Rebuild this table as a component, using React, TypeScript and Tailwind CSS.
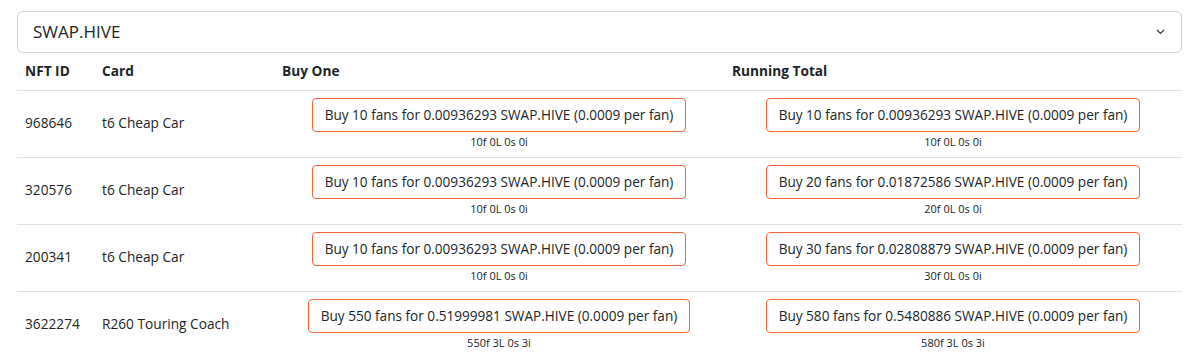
const rows = [
  { id: "968646", card: "t6 Cheap Car", one: "Buy 10 fans for 0.00936293 SWAP.HIVE (0.0009 per fan)", oneSub: "10f 0L 0s 0i", total: "Buy 10 fans for 0.00936293 SWAP.HIVE (0.0009 per fan)", totalSub: "10f 0L 0s 0i" },
  { id: "320576", card: "t6 Cheap Car", one: "Buy 10 fans for 0.00936293 SWAP.HIVE (0.0009 per fan)", oneSub: "10f 0L 0s 0i", total: "Buy 20 fans for 0.01872586 SWAP.HIVE (0.0009 per fan)", totalSub: "20f 0L 0s 0i" },
  { id: "200341", card: "t6 Cheap Car", one: "Buy 10 fans for 0.00936293 SWAP.HIVE (0.0009 per fan)", oneSub: "10f 0L 0s 0i", total: "Buy 30 fans for 0.02808879 SWAP.HIVE (0.0009 per fan)", totalSub: "30f 0L 0s 0i" },
  { id: "3622274", card: "R260 Touring Coach", one: "Buy 550 fans for 0.51999981 SWAP.HIVE (0.0009 per fan)", oneSub: "550f 3L 0s 3i", total: "Buy 580 fans for 0.5480886 SWAP.HIVE (0.0009 per fan)", totalSub: "580f 3L 0s 3i" },
];

function BuyCell({ label, sub }: { label: string; sub: string }) {
  return (
    <div className="flex flex-col items-center">
      <button
        type="button"
        className="h-[34px] rounded-[4px] border border-[#f0643c] bg-white px-3 text-[13.6px] leading-none text-[#212529]"
      >
        {label}
      </button>
      <div className="mt-[3px] text-[11px] leading-[14px] text-[#212529]">{sub}</div>
    </div>
  );
}

export default function App() {
  return (
    <div className="w-[1196px] bg-white px-[17px] pt-[11px] text-[#212529] [font-family:'Open_Sans',sans-serif]">
      <div className="flex h-[42px] w-[1165px] items-center justify-between rounded-[6px] border border-[#ced4da] pl-[15px] pr-[16px]">
        <span className="text-[17px]">SWAP.HIVE</span>
        <svg width="9" height="6" viewBox="0 0 9 6" fill="none">
          <path d="M1 1l3.5 3.5L8 1" stroke="#343a40" strokeWidth="1.2" />
        </svg>
      </div>
      <table className="w-[1165px] table-fixed border-collapse text-[13.7px]">
        <colgroup>
          <col className="w-[77px]" />
          <col className="w-[180px]" />
          <col className="w-[450px]" />
          <col />
        </colgroup>
        <thead>
          <tr className="h-[37px] border-b border-[#dee2e6] text-left font-bold">
            <th className="px-2 align-middle">NFT ID</th>
            <th className="px-2 align-middle">Card</th>
            <th className="px-2 align-middle">Buy One</th>
            <th className="px-2 align-middle">Running Total</th>
          </tr>
        </thead>
        <tbody>
          {rows.map((r) => (
            <tr key={r.id} className="h-[67px] border-b border-[#dee2e6]">
              <td className="px-2 align-middle">{r.id}</td>
              <td className="px-2 align-middle">{r.card}</td>
              <td className="px-2 align-middle">
                <BuyCell label={r.one} sub={r.oneSub} />
              </td>
              <td className="px-2 align-middle">
                <BuyCell label={r.total} sub={r.totalSub} />
              </td>
            </tr>
          ))}
        </tbody>
      </table>
    </div>
  );
}
